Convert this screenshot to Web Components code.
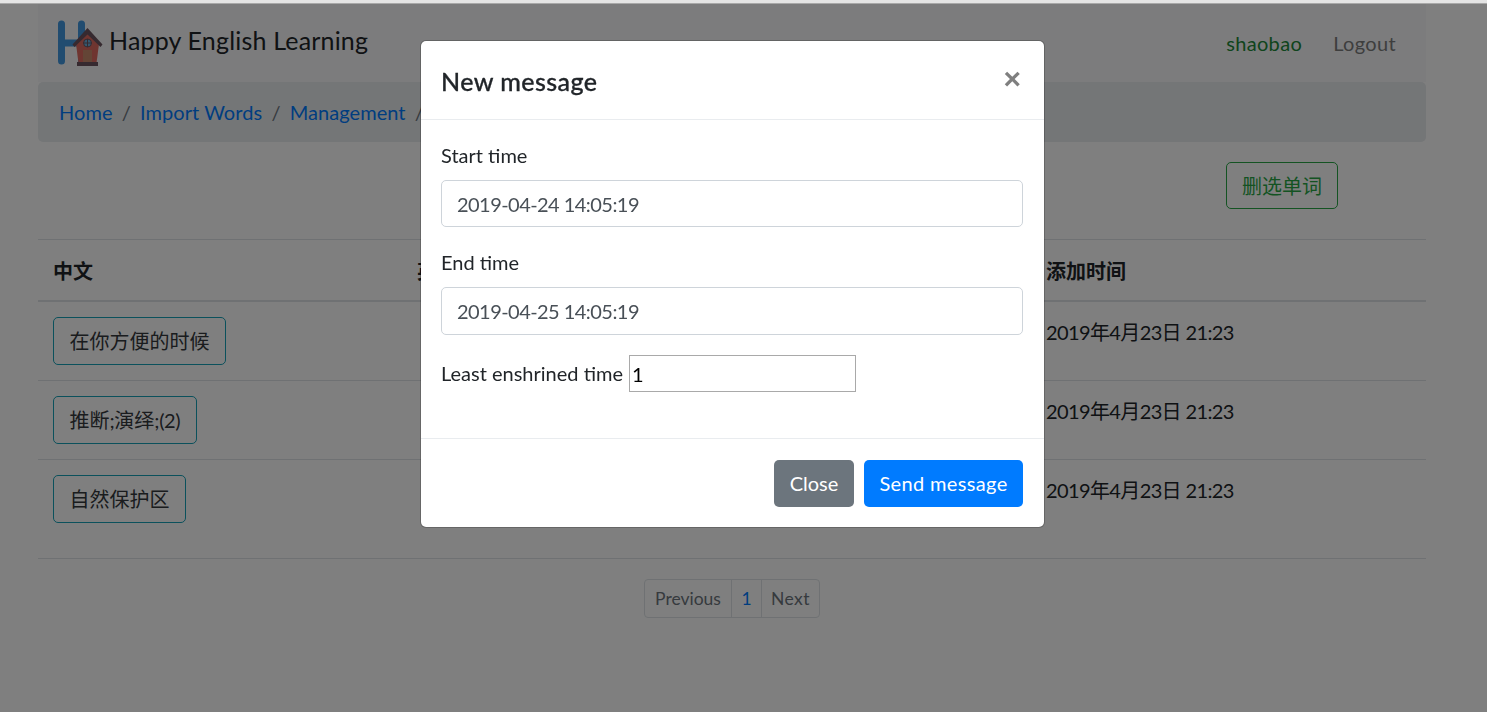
<!DOCTYPE html>
<html lang="zh">
<head>
<meta charset="utf-8">
<title>Happy English Learning</title>
<style>
    html, body {
        margin: 0;
        height: 100%;
        overflow: hidden;
        background: #fff;
        color: #212529;
        font-family: Lato, "Noto Sans CJK SC", sans-serif;
        font-size: 20px;
        line-height: 30px;
    }

    .top-strip {
        height: 3px;
        background: #e4e4e4;
        border-bottom: 1px solid #a8a8a8;
    }

    .container {
        width: 1388px;
        margin-left: 38px;
    }
</style>
</head>
<body>
<div class="top-strip"></div>
<div class="container">
    <hel-navbar brand="Happy English Learning" user="shaobao"></hel-navbar>
    <hel-breadcrumb items='["Home","Import Words","Management","Words"]'></hel-breadcrumb>
    <hel-toolbar>删选单词</hel-toolbar>
    <hel-word-table
        rows='[["在你方便的时候","2019年4月23日 21:23"],["推断<i>;</i>演绎<i>;(2)</i>","2019年4月23日 21:23"],["自然保护区","2019年4月23日 21:23"]]'
    ></hel-word-table>
    <hel-pagination></hel-pagination>
</div>
<hel-modal heading="New message">
    <hel-field label="Start time" value="2019-04-24 14:05:19"></hel-field>
    <hel-field label="End time" value="2019-04-25 14:05:19"></hel-field>
    <hel-inline-field label="Least enshrined time" value="1"></hel-inline-field>
</hel-modal>

<script>
class HelNavbar extends HTMLElement {
    connectedCallback() {
        this.attachShadow({ mode: "open" });
        this.shadowRoot.innerHTML = `
            <style>
                :host {
                    display: flex;
                    align-items: center;
                    justify-content: space-between;
                    box-sizing: border-box;
                    height: 78px;
                    padding: 0 30px 0 19px;
                    background: #f8f9fa;
                }
                .brand {
                    display: flex;
                    align-items: center;
                    gap: 5px;
                    font-size: 25px;
                    letter-spacing: 0.18px;
                    color: #212529;
                }
                .brand span { margin-top: -6px; }
                svg { display: block; }
                .links {
                    display: flex;
                    gap: 31px;
                    margin-top: -1px;
                    letter-spacing: 0.35px;
                }
                .user { color: #218838; }
                .logout { color: #7c7d7d; }
            </style>
            <div class="brand">
                <svg width="47" height="46" viewBox="0 0 47 46">
                    <path d="M4.500 4v37M24.500 4v37M4.500 23h20" fill="none" stroke="#4298e0" stroke-width="7" stroke-linecap="round"/>
                    <path d="M30.500 13 42 24 39.500 43H21.500L19 24z" fill="#de6a60"/>
                    <path d="M30.500 8 45.500 24.500 43.500 27 30.500 14.500 17.500 27 15.500 24.500z" fill="#6d5560"/>
                    <rect x="20" y="42" width="21" height="4" fill="#6d5560"/>
                    <rect x="26" y="30" width="9" height="12" fill="#c98a6c"/>
                    <circle cx="30.500" cy="23" r="4" fill="#68b0e0" stroke="#6d5560" stroke-width="1"/>
                    <path d="M30.500 19v8M26.500 23h8" stroke="#6d5560" stroke-width="1"/>
                </svg>
                <span>${this.getAttribute("brand")}</span>
            </div>
            <div class="links">
                <span class="user">${this.getAttribute("user")}</span>
                <span class="logout">Logout</span>
            </div>
        `;
    }
}

class HelBreadcrumb extends HTMLElement {
    connectedCallback() {
        const items = JSON.parse(this.getAttribute("items") || "[]");
        this.attachShadow({ mode: "open" });
        this.shadowRoot.innerHTML = `
            <style>
                :host {
                    display: flex;
                    align-items: center;
                    box-sizing: border-box;
                    height: 60px;
                    padding: 0 21px;
                    background: #e9ecef;
                    border-radius: 5px;
                    color: #6c757d;
                    letter-spacing: 0.05px;
                }
                a { color: #007bff; text-decoration: none; }
                .sep { padding: 0 9.250px; }
            </style>
            ${items
                .map(
                    (item, i) =>
                        `${i ? '<span class="sep">/</span>' : ""}<a href="#">${item}</a>`
                )
                .join("")}
        `;
    }
}

class HelToolbar extends HTMLElement {
    connectedCallback() {
        this.attachShadow({ mode: "open" });
        this.shadowRoot.innerHTML = `
            <style>
                :host {
                    display: flex;
                    justify-content: flex-end;
                    padding: 20px 88px 30px 0;
                }
                button {
                    box-sizing: border-box;
                    width: 112px;
                    height: 47px;
                    padding: 0;
                    font: inherit;
                    color: #28a745;
                    background: transparent;
                    border: 1px solid #28a745;
                    border-radius: 5px;
                }
            </style>
            <button><slot></slot></button>
        `;
    }
}

class HelWordTable extends HTMLElement {
    connectedCallback() {
        const rows = JSON.parse(this.getAttribute("rows") || "[]");
        this.attachShadow({ mode: "open" });
        this.shadowRoot.innerHTML = `
            <style>
                :host { display: block; }
                table {
                    width: 100%;
                    table-layout: fixed;
                    border-collapse: collapse;
                }
                th, td {
                    padding: 15px;
                    text-align: left;
                    vertical-align: top;
                    border-top: 1px solid #dee2e6;
                }
                th {
                    font-weight: 700;
                    border-bottom: 2.500px solid #dee2e6;
                    height: 30px;
                    padding-top: 16px;
                    padding-bottom: 14px;
                }
                td:last-child { letter-spacing: -0.62px; }
                tbody tr:last-child td {
                    padding-bottom: 35px;
                    border-bottom: 1px solid #dee2e6;
                }
                button {
                    box-sizing: border-box;
                    height: 48px;
                    padding: 0 15.500px;
                    font: inherit;
                    color: #34383c;
                    background: transparent;
                    border: 1px solid #17a2b8;
                    border-radius: 5px;
                    display: block;
                }
                i {
                    font-style: normal;
                    letter-spacing: -0.4px;
                }
            </style>
            <table>
                <colgroup>
                    <col style="width:364px">
                    <col style="width:629px">
                    <col>
                </colgroup>
                <thead>
                    <tr><th>中文</th><th>英文</th><th>添加时间</th></tr>
                </thead>
                <tbody>
                    ${rows
                        .map(
                            (row) =>
                                `<tr><td><button>${row[0]}</button></td><td></td><td>${row[1]}</td></tr>`
                        )
                        .join("")}
                </tbody>
            </table>
        `;
    }
}

class HelPagination extends HTMLElement {
    connectedCallback() {
        this.attachShadow({ mode: "open" });
        this.shadowRoot.innerHTML = `
            <style>
                :host {
                    display: flex;
                    justify-content: center;
                    padding: 20px 0 0 0;
                    font-size: 17.500px;
                    line-height: 26px;
                }
                .pager {
                    display: flex;
                    height: 39px;
                    box-sizing: border-box;
                    border: 1px solid #dee2e6;
                    border-radius: 4px;
                }
                span {
                    display: flex;
                    align-items: center;
                    justify-content: center;
                    padding-top: 1px;
                    color: #6c757d;
                }
                span + span { border-left: 1px solid #dee2e6; }
                .prev { width: 86px; }
                .num { width: 29px; color: #007bff; }
                .next { width: 57px; letter-spacing: 0.4px; }
            </style>
            <div class="pager">
                <span class="prev">Previous</span>
                <span class="num">1</span>
                <span class="next">Next</span>
            </div>
        `;
    }
}

class HelField extends HTMLElement {
    connectedCallback() {
        this.attachShadow({ mode: "open" });
        this.shadowRoot.innerHTML = `
            <style>
                :host {
                    display: block;
                    margin-bottom: 20px;
                }
                label {
                    display: block;
                    margin-bottom: 9.750px;
                }
                input {
                    display: block;
                    box-sizing: border-box;
                    width: 100%;
                    height: 47.500px;
                    padding: 0 15px;
                    font: inherit;
                    letter-spacing: -0.55px;
                    color: #495057;
                    border: 1px solid #ced4da;
                    border-radius: 5px;
                    outline: none;
                }
            </style>
            <label>${this.getAttribute("label")}</label>
            <input type="text" value="${this.getAttribute("value")}">
        `;
    }
}

class HelInlineField extends HTMLElement {
    connectedCallback() {
        this.attachShadow({ mode: "open" });
        this.shadowRoot.innerHTML = `
            <style>
                :host {
                    display: flex;
                    align-items: center;
                    gap: 6px;
                    padding-top: 0.500px;
                }
                label { padding-bottom: 1px; }
                input {
                    box-sizing: border-box;
                    width: 227px;
                    height: 37px;
                    padding: 0 2px;
                    font: inherit;
                    color: #000;
                    border: 1px solid #a9a9a9;
                    outline: none;
                }
            </style>
            <label>${this.getAttribute("label")}</label>
            <input type="text" value="${this.getAttribute("value")}">
        `;
    }
}

class HelModal extends HTMLElement {
    connectedCallback() {
        this.attachShadow({ mode: "open" });
        this.shadowRoot.innerHTML = `
            <style>
                :host {
                    position: fixed;
                    inset: 4px 0 0 0;
                    box-sizing: border-box;
                    display: flex;
                    justify-content: center;
                    align-items: flex-start;
                    padding: 36px 22px 0 0;
                    background: rgba(0, 0, 0, 0.5);
                }
                .dialog {
                    box-sizing: border-box;
                    width: 625px;
                    background: #fff;
                    border: 1px solid rgba(0, 0, 0, 0.2);
                    border-radius: 6px;
                    background-clip: padding-box;
                }
                header {
                    display: flex;
                    justify-content: space-between;
                    box-sizing: border-box;
                    height: 79px;
                    padding: 20px;
                    border-bottom: 1px solid #e9ecef;
                }
                h5 {
                    margin: 0;
                    font-size: 25px;
                    line-height: 40px;
                    font-weight: 500;
                    letter-spacing: 0.45px;
                    -webkit-text-stroke: 0.3px #212529;
                }
                .close {
                    font-size: 30px;
                    line-height: 36px;
                    font-weight: 700;
                    color: #7f7f7f;
                    font-family: "Liberation Sans", sans-serif;
                    margin-right: 3px;
                }
                .body {
                    padding: 20px 21px 46px 20px;
                    height: 318px;
                    box-sizing: border-box;
                }
                footer {
                    display: flex;
                    justify-content: flex-end;
                    gap: 10px;
                    padding: 21px 21px 20px 20px;
                    border-top: 1px solid #e9ecef;
                }
                button {
                    box-sizing: border-box;
                    height: 47px;
                    padding: 0 0 2px;
                    font: inherit;
                    color: #fff;
                    border: none;
                    border-radius: 5px;
                }
                .secondary { width: 80px; background: #6c757d; }
                .primary {
                    width: 159px;
                    background: #007bff;
                    letter-spacing: 0.35px;
                }
            </style>
            <div class="dialog">
                <header>
                    <h5>${this.getAttribute("heading")}</h5>
                    <span class="close">×</span>
                </header>
                <div class="body"><slot></slot></div>
                <footer>
                    <button class="secondary">Close</button>
                    <button class="primary">Send message</button>
                </footer>
            </div>
        `;
    }
}

customElements.define("hel-navbar", HelNavbar);
customElements.define("hel-breadcrumb", HelBreadcrumb);
customElements.define("hel-toolbar", HelToolbar);
customElements.define("hel-word-table", HelWordTable);
customElements.define("hel-pagination", HelPagination);
customElements.define("hel-field", HelField);
customElements.define("hel-inline-field", HelInlineField);
customElements.define("hel-modal", HelModal);
</script>
</body>
</html>
